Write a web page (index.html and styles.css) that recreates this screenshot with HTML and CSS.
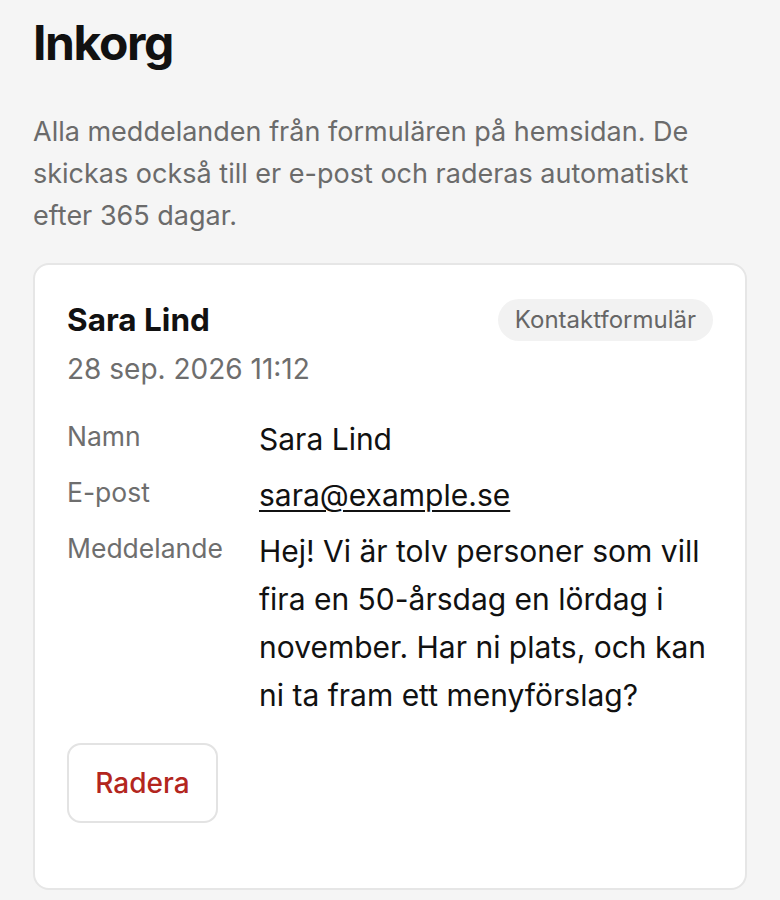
FILE: index.html
```html
<!DOCTYPE html>
<html lang="sv">
<head>
<meta charset="utf-8">
<title>Inkorg</title>
<link rel="stylesheet" href="styles.css">
</head>
<body>
<main class="page">
  <h1 class="title">Inkorg</h1>
  <p class="intro">Alla meddelanden från formulären på hemsidan. De skickas också till er e-post och raderas automatiskt efter 365 dagar.</p>
  <article class="card">
    <header class="card-head">
      <div class="who">
        <div class="name">Sara Lind</div>
        <div class="date">28 sep. 2026 11:12</div>
      </div>
      <span class="badge">Kontaktformulär</span>
    </header>
    <dl class="fields">
      <dt>Namn</dt>
      <dd>Sara Lind</dd>
      <dt>E-post</dt>
      <dd><a href="#" class="mail">sara@example.se</a></dd>
      <dt>Meddelande</dt>
      <dd>Hej! Vi är tolv personer som vill fira en 50-årsdag en lördag i november. Har ni plats, och kan ni ta fram ett menyförslag?</dd>
    </dl>
    <div class="actions">
      <button class="btn-delete" type="button">Radera</button>
    </div>
  </article>
</main>
</body>
</html>
```

FILE: styles.css
```css
* { box-sizing: border-box; }
html, body { margin: 0; padding: 0; }
body {
  background: #f5f5f5;
  font-family: Inter, "Noto Sans", "Liberation Sans", sans-serif;
  color: #111111;
}
.page {
  padding: 14px 33px 0;
}
.title {
  margin: 0;
  font-size: 48px;
  line-height: 58px;
  font-weight: 700;
  letter-spacing: -1.4px;
  color: #111111;
}
.intro {
  margin: 39px 0 0;
  font-size: 27px;
  line-height: 42px;
  color: #6b6b6b;
}
.card {
  margin-top: 26px;
  background: #ffffff;
  border: 2px solid #e6e6e6;
  border-radius: 16px;
  padding: 35px 32px 65px;
}
.card-head {
  display: flex;
  justify-content: space-between;
  align-items: flex-start;
}
.name {
  font-size: 31.5px;
  line-height: 40px;
  font-weight: 700;
}
.date {
  margin-top: 11px;
  font-size: 28px;
  line-height: 36px;
  color: #6e6e6e;
}
.badge {
  margin-top: -1px;
  background: #f2f2f2;
  color: #666666;
  border-radius: 999px;
  padding: 0 17px;
  height: 42px;
  line-height: 42px;
  font-size: 24px;
}
.fields {
  margin: 28px 0 0;
  display: grid;
  grid-template-columns: 176px 1fr;
  column-gap: 16px;
  row-gap: 8px;
}
.fields dt {
  font-size: 26.5px;
  line-height: 42px;
  color: #6e6e6e;
}
.fields dd {
  margin: 0;
  font-size: 30px;
  line-height: 48px;
  color: #111111;
}
.mail {
  color: #111111;
  text-decoration: underline;
  text-underline-offset: 4px;
  text-decoration-thickness: 2px;
}
.actions {
  margin-top: 24px;
}
.btn-delete {
  font-family: inherit;
  font-size: 28px;
  font-weight: 500;
  color: #b3261e;
  background: #ffffff;
  border: 2px solid #e3e3e3;
  border-radius: 14px;
  width: 151px;
  height: 80px;
  padding: 0;
}
```
